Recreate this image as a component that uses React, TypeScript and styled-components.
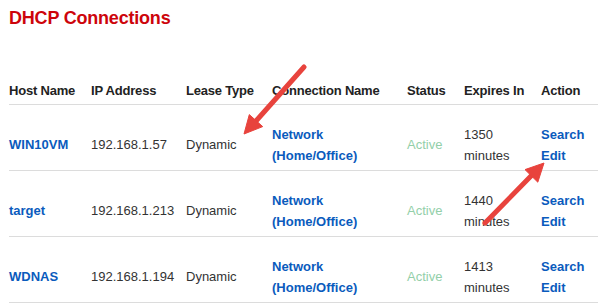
import React, { FC } from 'react';
import styled, { createGlobalStyle } from 'styled-components';

const Global = createGlobalStyle`
  html, body {
    margin: 0;
    padding: 0;
    background: #fff;
    font-family: 'Liberation Sans', Arial, sans-serif;
  }
`;

type Lease = {
  host: string;
  ip: string;
  type: string;
  status: string;
  expires: string;
};

const rows: Lease[] = [
  { host: 'WIN10VM', ip: '192.168.1.57', type: 'Dynamic', status: 'Active', expires: '1350' },
  { host: 'target', ip: '192.168.1.213', type: 'Dynamic', status: 'Active', expires: '1440' },
  { host: 'WDNAS', ip: '192.168.1.194', type: 'Dynamic', status: 'Active', expires: '1413' }
];

const columns = ['Host Name', 'IP Address', 'Lease Type', 'Connection Name', 'Status', 'Expires In', 'Action'];

const Page = styled.div`
  position: relative;
  width: 598px;
  height: 306px;
  overflow: hidden;
  padding: 8px 0 0 9px;
  box-sizing: border-box;
`;

const Title = styled.h1`
  margin: 0;
  font-size: 18px;
  line-height: 20px;
  font-weight: 700;
  color: #cd040b;
  letter-spacing: -0.2px;
`;

const Table = styled.div`
  margin-top: 50px;
  display: grid;
  grid-template-columns: 82px 95px 86px 135px 57px 77px 1fr;
`;

const HeadCell = styled.div`
  font-size: 13px;
  font-weight: 700;
  color: #222;
  padding: 5px 0 5px;
  line-height: 16px;
  border-bottom: 1px solid #dcdcdc;
  white-space: nowrap;
  letter-spacing: -0.2px;
`;

const Cell = styled.div<{ $tone?: 'link' | 'muted' | 'plain' }>`
  height: 66px;
  box-sizing: border-box;
  padding-top: 14px;
  border-bottom: 1px solid #dcdcdc;
  display: flex;
  flex-direction: column;
  justify-content: center;
  font-size: 13px;
  line-height: 21px;
  white-space: nowrap;
  color: ${(p) => (p.$tone === 'link' ? '#0a5bbd' : p.$tone === 'muted' ? '#93cfa9' : '#333')};
  font-weight: ${(p) => (p.$tone === 'link' ? 700 : 400)};
`;

const Overlay = styled.svg`
  position: absolute;
  left: 0;
  top: 0;
  pointer-events: none;
`;

const Arrow: FC<{ line: string; head: string }> = ({ line, head }) => (
  <g fill='#e8433d' stroke='#e8433d'>
    <path d={line} strokeWidth={5} strokeLinecap='round' fill='none' />
    <polygon points={head} strokeWidth={1} strokeLinejoin='round' />
  </g>
);

const App: FC = () => (
  <Page>
    <Global />
    <Title>DHCP Connections</Title>
    <Table>
      {columns.map((c) => (
        <HeadCell key={c}>{c}</HeadCell>
      ))}
      {rows.map((r) => (
        <React.Fragment key={r.host}>
          <Cell $tone='link'>{r.host}</Cell>
          <Cell>{r.ip}</Cell>
          <Cell>{r.type}</Cell>
          <Cell $tone='link'>
            <span>Network</span>
            <span>(Home/Office)</span>
          </Cell>
          <Cell $tone='muted'>{r.status}</Cell>
          <Cell>
            <span>{r.expires}</span>
            <span>minutes</span>
          </Cell>
          <Cell $tone='link'>
            <span>Search</span>
            <span>Edit</span>
          </Cell>
        </React.Fragment>
      ))}
    </Table>
    <Overlay width={598} height={306}>
      <Arrow line='M304 67 L256 121' head='244,134 262.7,126.6 249.3,114.6' />
      <Arrow line='M485 223 L531 176' head='544,163 537.8,182.2 525,169.6' />
    </Overlay>
  </Page>
);

export default App;
